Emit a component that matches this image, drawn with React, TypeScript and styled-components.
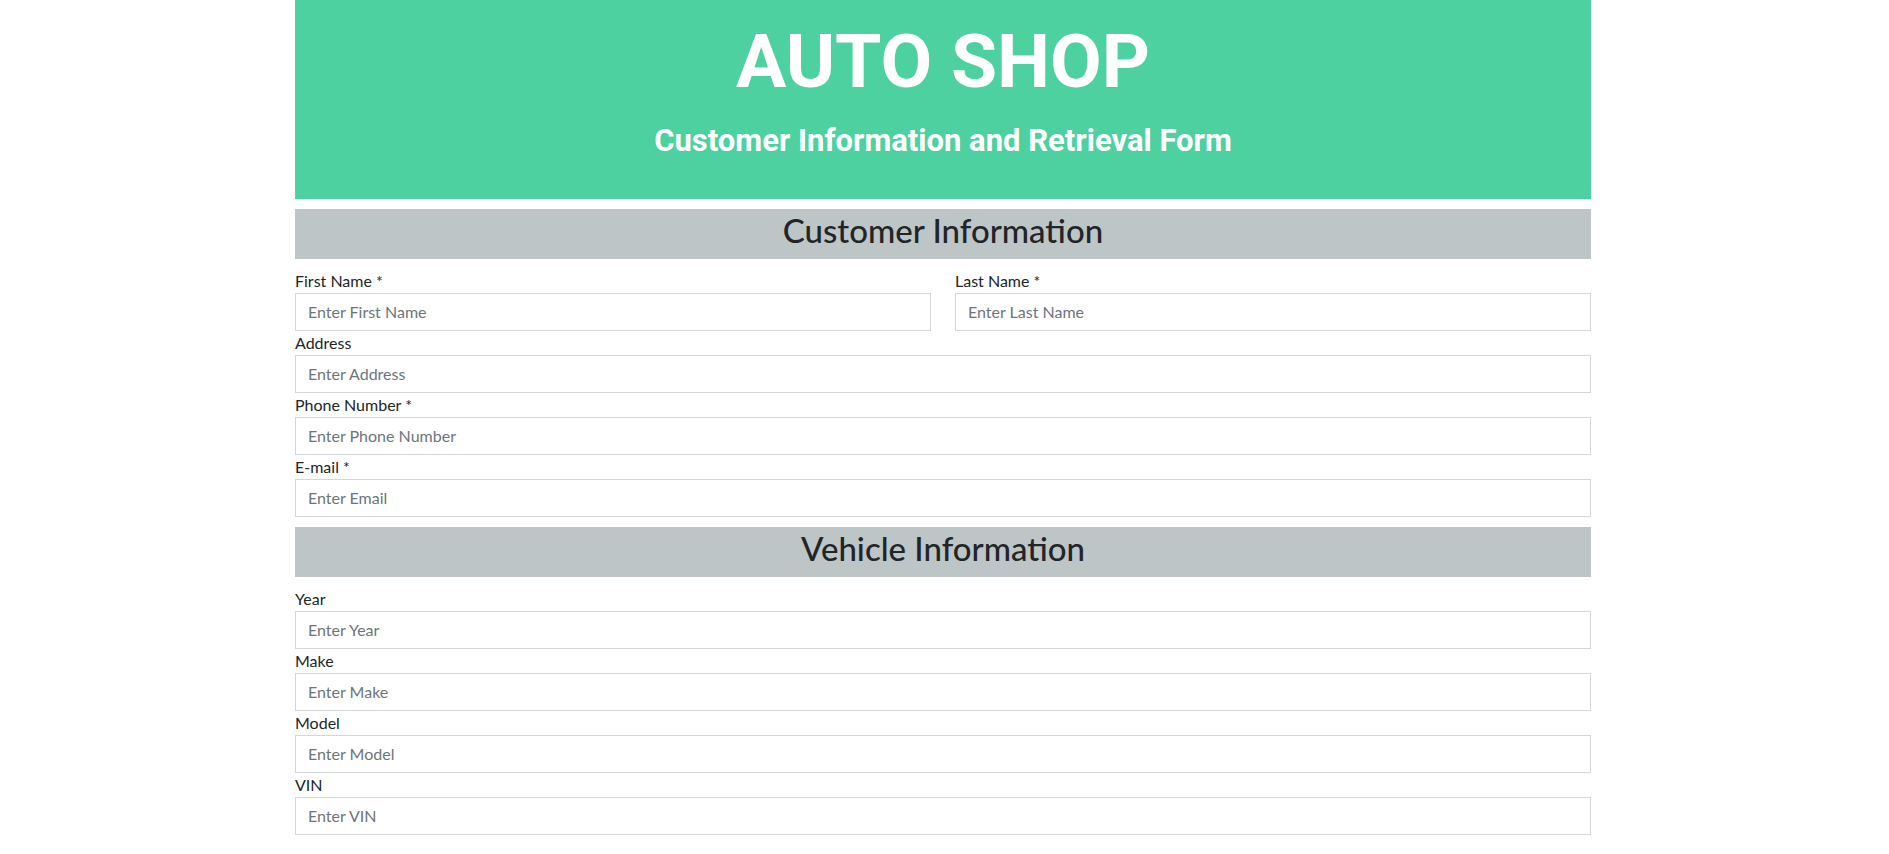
import React from "react";
import styled, { createGlobalStyle } from "styled-components";

const GlobalStyle = createGlobalStyle`
  html, body {
    margin: 0;
    padding: 0;
    background: #ffffff;
  }
  body {
    font-family: Lato, "Noto Sans", "Liberation Sans", sans-serif;
    font-size: 16px;
    line-height: 1.5;
    color: #212529;
  }
  * { box-sizing: border-box; }
`;

const Page = styled.div`
  width: 1296px;
  margin-left: calc(50% - 649.5px);
  padding-bottom: 19px;
`;

const Header = styled.header`
  height: 199px;
  background: #4ed1a0;
  color: #ffffff;
  text-align: center;
  padding-top: 24px;
  font-family: Roboto, "Liberation Sans", sans-serif;
  font-weight: 700;
`;

const Title = styled.h1`
  margin: 0 0 26px;
  font-size: 75px;
  line-height: 75px;
  font-weight: 700;
  letter-spacing: 0;
`;

const Subtitle = styled.h3`
  margin: 0;
  font-size: 31px;
  line-height: 31px;
  font-weight: 700;
  letter-spacing: 0;
`;

const SectionBar = styled.div`
  margin-top: 10px;
  height: 50px;
  background: #bdc5c6;
  padding-top: 2px;
  text-align: center;
`;

const SectionTitle = styled.h2`
  margin: 0;
  font-size: 33px;
  line-height: 38px;
  font-weight: 500;
  color: #212529;
`;

const Fields = styled.div`
  padding-top: 10px;
`;

const Row = styled.div<{ $cols?: number }>`
  display: grid;
  grid-template-columns: repeat(${(p) => p.$cols ?? 1}, 1fr);
  column-gap: 24px;
`;

const Field = styled.div`
  display: flex;
  flex-direction: column;
`;

const Label = styled.label`
  display: block;
  font-size: 16px;
  line-height: 24px;
  color: #212529;
`;

const Input = styled.input`
  display: block;
  width: 100%;
  height: 38px;
  padding: 5px 12px 7px;
  font-family: inherit;
  font-size: 16px;
  line-height: 24px;
  color: #212529;
  background: #ffffff;
  border: 1px solid #d3d6da;
  border-radius: 0;
  outline: none;
  &::placeholder {
    color: #6c757d;
    opacity: 1;
  }
`;

type F = { label: string; placeholder: string };

const FormField = ({ label, placeholder }: F) => {
  const id = label.toLowerCase().replace(/[^a-z]+/g, "-");
  return (
    <Field>
      <Label htmlFor={id}>{label}</Label>
      <Input id={id} type="text" placeholder={placeholder} />
    </Field>
  );
};

const customerFields: F[] = [
  { label: "Address", placeholder: "Enter Address" },
  { label: "Phone Number *", placeholder: "Enter Phone Number" },
  { label: "E-mail *", placeholder: "Enter Email" },
];

const vehicleFields: F[] = [
  { label: "Year", placeholder: "Enter Year" },
  { label: "Make", placeholder: "Enter Make" },
  { label: "Model", placeholder: "Enter Model" },
  { label: "VIN", placeholder: "Enter VIN" },
];

export default function App() {
  return (
    <>
      <GlobalStyle />
      <Page>
        <Header>
          <Title>AUTO SHOP</Title>
          <Subtitle>Customer Information and Retrieval Form</Subtitle>
        </Header>
        <SectionBar>
          <SectionTitle>Customer Information</SectionTitle>
        </SectionBar>
        <Fields>
          <Row $cols={2}>
            <FormField label="First Name *" placeholder="Enter First Name" />
            <FormField label="Last Name *" placeholder="Enter Last Name" />
          </Row>
          {customerFields.map((f) => (
            <FormField key={f.label} {...f} />
          ))}
        </Fields>
        <SectionBar>
          <SectionTitle>Vehicle Information</SectionTitle>
        </SectionBar>
        <Fields>
          {vehicleFields.map((f) => (
            <FormField key={f.label} {...f} />
          ))}
        </Fields>
      </Page>
    </>
  );
}
